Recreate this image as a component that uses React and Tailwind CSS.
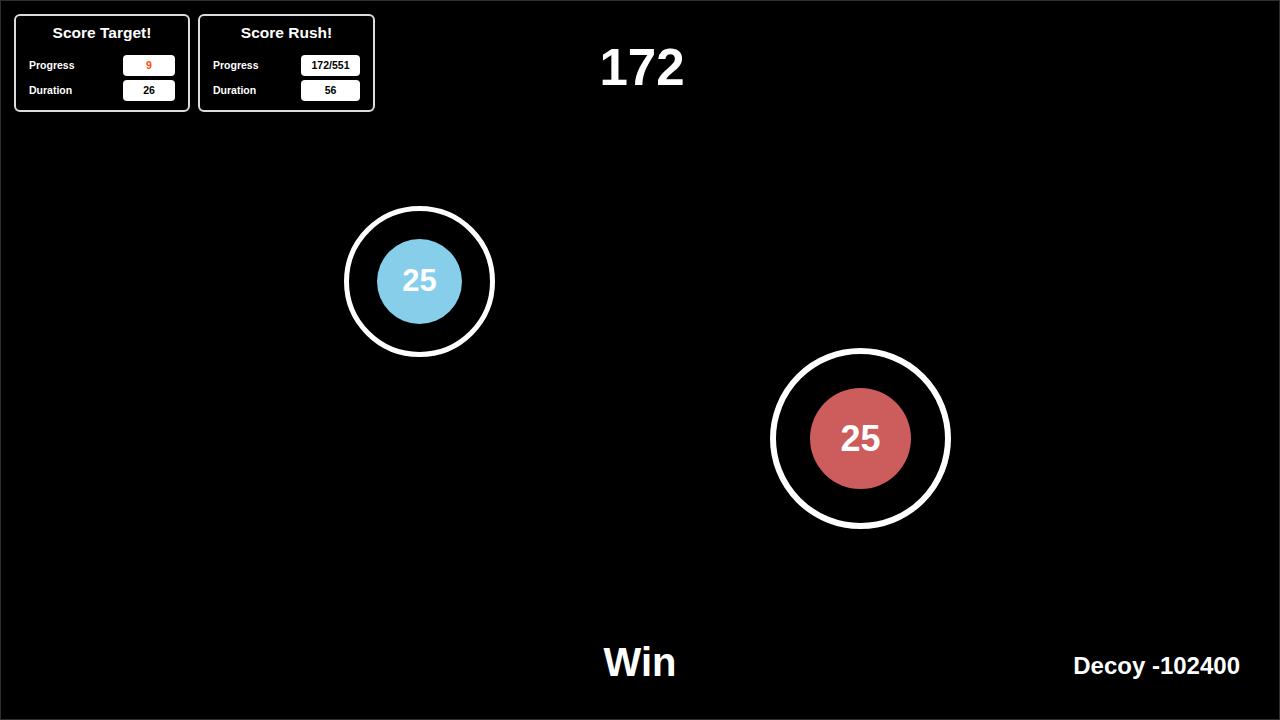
import React from "react";

const FONT = { fontFamily: '"Liberation Sans", Arial, Helvetica, sans-serif' };

const PANELS = [
  {
    title: "Score Target!",
    panelW: "w-[176px]",
    boxW: "w-[52px]",
    rows: [
      { k: "Progress", v: "9", hot: true },
      { k: "Duration", v: "26" },
    ],
  },
  {
    title: "Score Rush!",
    panelW: "w-[177px]",
    boxW: "w-[59px]",
    rows: [
      { k: "Progress", v: "172/551" },
      { k: "Duration", v: "56" },
    ],
  },
];

function Panel({ title, rows, boxW, panelW }) {
  return (
    <div className={`${panelW} h-[98px] rounded-[6px] border-2 border-[#dcdcdc] bg-black pt-[8px] px-[13px]`}>
      <div className="text-center text-white font-bold text-[15.5px] leading-[18px]">
        {title}
      </div>
      <div className="mt-[13px] flex flex-col gap-[4px]">
        {rows.map((r) => (
          <div key={r.k} className="flex items-center justify-between">
            <span className="text-white font-bold text-[10.5px]">{r.k}</span>
            <span
              className={`${boxW} h-[21px] rounded-[4px] bg-white flex items-center justify-center font-bold text-[10.5px] ${
                r.hot ? "text-[#ff4a12]" : "text-black"
              }`}
            >
              {r.v}
            </span>
          </div>
        ))}
      </div>
    </div>
  );
}

function Target({ x, y, outer, ring, inner, color, size }) {
  return (
    <div
      className="absolute rounded-full border-white flex items-center justify-center"
      style={{ left: x, top: y, width: outer, height: outer, borderWidth: ring }}
    >
      <div
        className="rounded-full flex items-center justify-center text-white font-bold"
        style={{ width: inner, height: inner, backgroundColor: color, fontSize: size }}
      >
        25
      </div>
    </div>
  );
}

export default function App() {
  return (
    <div
      className="relative w-[1280px] h-[720px] bg-black border border-[#2e2e2e] overflow-hidden flex flex-col"
      style={FONT}
    >
      {/* top bar */}
      <div className="grid grid-cols-[1fr_auto_1fr] pt-[13px] px-[13px]">
        <div className="flex gap-[8px]">
          {PANELS.map((p) => (
            <Panel key={p.title} {...p} />
          ))}
        </div>
        <div className="mt-[28px] ml-[4px] text-white font-bold text-[51px] leading-none">
          172
        </div>
        <div />
      </div>

      {/* play field */}
      <div className="flex-1" />
      <Target x={343} y={205} outer={151} ring={5} inner={85} color="#87ceeb" size={31} />
      <Target x={769} y={347} outer={181} ring={6} inner={101} color="#cd5c5c" size={36} />

      {/* bottom bar */}
      <div className="grid grid-cols-[1fr_auto_1fr] items-end pb-[37px]">
        <div />
        <div className="text-white font-bold text-[40px] leading-none">Win</div>
        <div className="text-right pr-[39px] text-white font-bold text-[24px] leading-none pb-[4px]">
          Decoy -102400
        </div>
      </div>
    </div>
  );
}
